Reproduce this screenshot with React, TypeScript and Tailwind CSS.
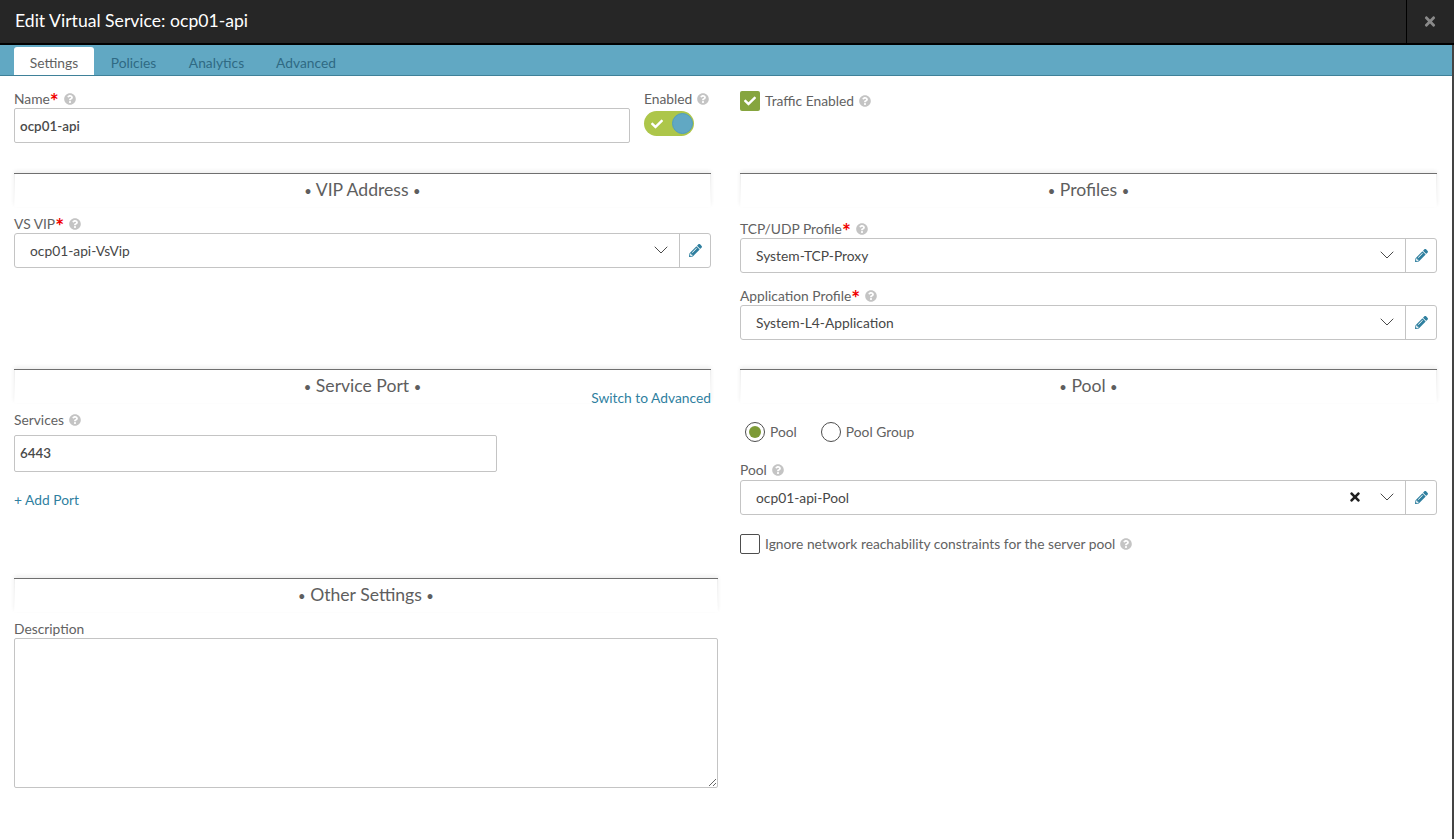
import { ChevronDown } from "lucide-react";
import { FaCheck, FaPencilAlt, FaQuestionCircle, FaTimes } from "react-icons/fa";

function Help({ className = "" }: { className?: string }) {
  return <FaQuestionCircle className={`inline-block h-[12px] w-[12px] text-[#c4c4c4] ${className}`} />;
}

function Label({ text, required, className = "" }: { text: string; required?: boolean; className?: string }) {
  return (
    <div className={`flex h-[18px] items-center text-[13.8px] leading-[18px] text-[#626262] ${className}`}>
      <span>{text}</span>
      {required && <span className="h-[18px] text-[21px] font-bold leading-[21px] text-[#f00000]">*</span>}
      <Help className="ml-[5px]" />
    </div>
  );
}

function Section({ title, className = "" }: { title: string; className?: string }) {
  return (
    <div className={`h-[34px] border-t border-[#6f6f6f] bg-gradient-to-b from-[#eeeeee] to-[#ffffff] px-[1px] shadow-[0_-2px_4px_rgba(0,0,0,0.07)] ${className}`}>
      <div className="h-full bg-white pt-[4px] text-center text-[17.6px] leading-[24px] text-[#5e5e5e]">
        <span className="text-[13px]">•</span> {title} <span className="text-[13px]">•</span>
      </div>
    </div>
  );
}

function Select({ value, clear }: { value: string; clear?: boolean }) {
  return (
    <div className="flex h-[35px] items-stretch rounded-[3px] border border-[#c4c4c4] bg-white">
      <div className="flex-1 pl-[15px] text-[13.8px] leading-[33px] text-[#474747]">{value}</div>
      {clear && <FaTimes className="mr-[14px] mt-[9px] h-[14px] w-[12px] text-[#1f1f1f]" />}
      <ChevronDown className="mr-[6px] mt-[4px] h-[24px] w-[24px] text-[#4a4a4a]" strokeWidth={1} />
      <div className="flex w-[31px] items-center justify-center border-l border-[#c4c4c4]">
        <FaPencilAlt className="h-[13px] w-[13px] text-[#2f7f9f]" />
      </div>
    </div>
  );
}

function CheckBox({ checked }: { checked?: boolean }) {
  return (
    <div
      className={
        checked
          ? "flex h-[20px] w-[20px] items-center justify-center rounded-[2px] bg-[#86a53e]"
          : "h-[20px] w-[20px] rounded-[2px] border border-[#4d4d4d] bg-white"
      }
    >
      {checked && <FaCheck className="h-[12px] w-[12px] text-white" />}
    </div>
  );
}

export default function App() {
  return (
    <div className="relative h-[839px] w-[1454px] overflow-hidden bg-white font-['Lato',sans-serif]">
      {/* Header */}
      <div className="flex h-[45px] border-b-2 border-black bg-[#262626] pr-[2px]">
        <h1 className="flex-1 pl-[15px] text-[17.6px] font-normal leading-[41px] text-white">Edit Virtual Service: ocp01-api</h1>
        <div className="flex w-[46px] items-center justify-center border-l border-black">
          <FaTimes className="h-[15px] w-[12px] text-[#8a8a8a]" />
        </div>
      </div>

      {/* Tabs */}
      <div className="flex h-[31px] items-end border-b border-[#3f8199] bg-[#61a8c3] pl-[14px] pr-[2px] text-[13.8px]">
        <div className="flex h-[28px] w-[80px] items-center justify-center rounded-t-[3px] bg-white pt-[4px] text-[#626262]">Settings</div>
        <div className="flex h-[28px] w-[79px] items-center justify-center pt-[4px] text-[#2f6a84]">Policies</div>
        <div className="flex h-[28px] w-[87px] items-center justify-center pt-[4px] text-[#2f6a84]">Analytics</div>
        <div className="flex h-[28px] w-[92px] items-center justify-center pt-[4px] text-[#2f6a84]">Advanced</div>
      </div>

      {/* Form */}
      <div className="flex gap-[22px] pl-[14px]">
        {/* Left column */}
        <div className="w-[704px]">
          <div className="w-[697px]">
            <div className="flex h-[97px] pt-[14px]">
              <div className="w-[630px]">
                <Label text="Name" required />
                <div className="h-[35px] w-[616px] rounded-[2px] border border-[#c4c4c4] pl-[5px] text-[13.4px] font-semibold leading-[34px] text-[#4a4a4a]">ocp01-api</div>
              </div>
              <div>
                <Label text="Enabled" />
                <div className="mt-[3px] flex h-[25px] w-[50px] items-center justify-between rounded-full bg-[#adc64a] pl-[7px] pr-[1px]">
                  <FaCheck className="h-[12px] w-[12px] text-white" />
                  <div className="h-[21px] w-[21px] rounded-full border border-[#4f9cc0] bg-[#61a8c3]" />
                </div>
              </div>
            </div>
            <Section title="VIP Address" />
            <Label text="VS VIP" required className="mt-[8px]" />
            <Select value="ocp01-api-VsVip" />
            <div className="h-[101px]" />
            <div className="relative">
              <Section title="Service Port" />
              <a className="absolute right-0 top-[20px] text-[13.8px] leading-[18px] text-[#2f7f9f]">Switch to Advanced</a>
            </div>
            <Label text="Services" className="mt-[8px]" />
            <div className="mt-[6px] h-[37px] w-[483px] rounded-[2px] border border-[#c4c4c4] pl-[5px] text-[13.4px] font-semibold leading-[34px] text-[#4a4a4a]">6443</div>
            <a className="mt-[19px] block text-[13.8px] leading-[18px] text-[#2f7f9f]">+ Add Port</a>
          </div>
          <div className="mt-[69px]">
            <Section title="Other Settings" />
            <div className="mt-[8px] h-[18px] text-[13.8px] leading-[18px] text-[#626262]">Description</div>
            <textarea className="block h-[150px] w-[704px] rounded-[2px] border border-[#c4c4c4] bg-white" />
          </div>
        </div>

        {/* Right column */}
        <div className="w-[697px]">
          <div className="flex h-[97px] items-start gap-[5px] pt-[15px]">
            <CheckBox checked />
            <div className="mt-[1px]">
              <Label text="Traffic Enabled" />
            </div>
          </div>
          <Section title="Profiles" />
          <Label text="TCP/UDP Profile" required className="mt-[13px]" />
          <Select value="System-TCP-Proxy" />
          <Label text="Application Profile" required className="mt-[14px]" />
          <Select value="System-L4-Application" />
          <div className="h-[29px]" />
          <Section title="Pool" />
          <div className="mt-[18px] flex h-[22px] items-center pl-[5px] text-[13.8px] text-[#626262]">
            <div className="flex h-[20px] w-[20px] items-center justify-center rounded-full border border-[#4d4d4d]">
              <div className="h-[12px] w-[12px] rounded-full bg-[#7d9a36]" />
            </div>
            <span className="ml-[5px]">Pool</span>
            <div className="ml-[24px] h-[20px] w-[20px] rounded-full border border-[#4d4d4d]" />
            <span className="ml-[5px]">Pool Group</span>
          </div>
          <Label text="Pool" className="mt-[18px]" />
          <div className="mt-[1px]">
            <Select value="ocp01-api-Pool" clear />
          </div>
          <div className="mt-[19px] flex items-center gap-[5px]">
            <CheckBox />
            <Label text="Ignore network reachability constraints for the server pool" />
          </div>
        </div>
      </div>

      {/* Window edge */}
      <div className="absolute bottom-0 right-0 top-[45px] w-[2px] bg-[#444444]" />
    </div>
  );
}
